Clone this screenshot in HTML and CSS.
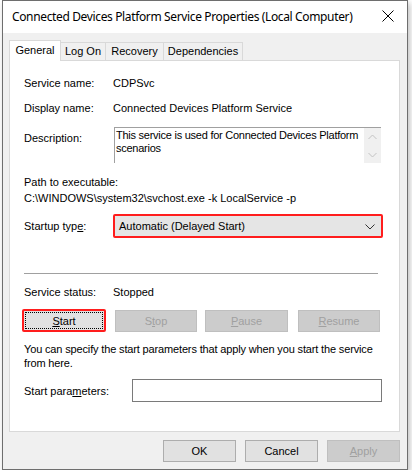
FILE: index.html
```html
<!DOCTYPE html>
<html lang="en">

<head>
    <meta charset="UTF-8">
    <meta name="viewport" content="width=device-width, initial-scale=1.0">
    <title>Connected Devices Platform Service Properties (Local Computer)</title>
    <link rel="stylesheet" href="styles.css">
</head>

<body>
    <div class="window">
        <div class="titlebar">
            <span class="title">Connected Devices Platform Service Properties (Local Computer)</span>
            <span class="close">
                <svg width="12" height="12" viewBox="0 0 12 12">
                    <path d="M0.5 0.5 L11.5 11.5 M11.5 0.5 L0.5 11.5" stroke="#000" stroke-width="1" fill="none" />
                </svg>
            </span>
        </div>
        <div class="client">
            <ul class="tabs">
                <li class="active tab-general">General</li>
                <li class="tab-logon">Log On</li>
                <li class="tab-recovery">Recovery</li>
                <li class="tab-deps">Dependencies</li>
            </ul>
            <div class="panel">
                <div class="row row-name">
                    <span class="label">Service name:</span>
                    <span class="value">CDPSvc</span>
                </div>
                <div class="row row-display">
                    <span class="label">Display name:</span>
                    <span class="value">Connected Devices Platform Service</span>
                </div>
                <div class="row row-desc">
                    <span class="label">Description:</span>
                    <div class="desc">
                        <div class="desc-text">This service is used for Connected Devices Platform scenarios</div>
                        <div class="scroll">
                            <svg width="9" height="6" viewBox="0 0 9 6"><path d="M0.5 5 L4.5 1 L8.5 5" stroke="#c2c2c2" fill="none" /></svg>
                            <svg width="9" height="6" viewBox="0 0 9 6"><path d="M0.5 1 L4.5 5 L8.5 1" stroke="#c2c2c2" fill="none" /></svg>
                        </div>
                    </div>
                </div>
                <div class="path">
                    <div>Path to executable:</div>
                    <div>C:\WINDOWS\system32\svchost.exe -k LocalService -p</div>
                </div>
                <div class="row row-startup">
                    <span class="label">Startup typ<u>e</u>:</span>
                    <div class="combo">
                        <span>Automatic (Delayed Start)</span>
                        <svg width="10" height="6" viewBox="0 0 10 6"><path d="M0.5 0.5 L5 5 L9.5 0.5" stroke="#333" fill="none" /></svg>
                    </div>
                </div>
                <div class="sep"></div>
                <div class="row row-status">
                    <span class="label">Service status:</span>
                    <span class="value">Stopped</span>
                </div>
                <div class="buttons">
                    <div class="mark"><button class="btn focus"><span><u>S</u>tart</span></button></div>
                    <button class="btn disabled btn-stop">S<u>t</u>op</button>
                    <button class="btn disabled btn-pause"><u>P</u>ause</button>
                    <button class="btn disabled btn-resume"><u>R</u>esume</button>
                </div>
                <p class="hint">You can specify the start parameters that apply when you start the service from here.</p>
                <div class="row row-params">
                    <span class="label">Start para<u>m</u>eters:</span>
                    <div class="input"></div>
                </div>
            </div>
            <div class="footer">
                <button class="btn">OK</button>
                <button class="btn">Cancel</button>
                <button class="btn disabled"><u>A</u>pply</button>
            </div>
        </div>
    </div>
</body>

</html>
```

FILE: styles.css
```css
body {
    margin: 0;
    background: #fff;
    font-family: "Liberation Sans", Arial, sans-serif;
    font-size: 11px;
    color: #000;
}

ul {
    list-style: none;
    padding: 0;
    margin: 0;
}

.window {
    width: 404px;
    height: 468px;
    margin-left: 2px;
    border: 1px solid #6e6e6e;
    background: #f0f0f0;
    box-shadow: 2px 3px 6px rgba(0, 0, 0, 0.25);
}

.titlebar {
    height: 32px;
    background: #fff;
    display: flex;
    align-items: center;
    justify-content: space-between;
    padding: 0 13px 0 9px;
}

.title {
    font-family: "Noto Sans", sans-serif;
    font-size: 12px;
    letter-spacing: -0.36px;
    margin-top: -1px;
}

.close {
    display: flex;
    margin-top: -2px;
}

.client {
    padding: 7px 7px 0 6px;
}

.tabs {
    display: flex;
    align-items: flex-end;
    height: 20px;
}

.tabs li {
    line-height: 17px;
    border: 1px solid #d9d9d9;
    border-bottom: none;
    border-left: none;
    background: #f0f0f0;
    text-align: center;
    box-sizing: border-box;
    height: 18px;
}

.tabs li.active {
    height: 21px;
    line-height: 18px;
    background: #fff;
    border-left: 1px solid #d9d9d9;
    position: relative;
    z-index: 1;
    margin-bottom: -1px;
}

.tab-general {
    width: 52px;
}

.tab-logon {
    width: 45px;
}

.tab-recovery {
    width: 58px;
}

.tab-deps {
    width: 79px;
}

.panel {
    height: 370px;
    background: #fff;
    border: 1px solid #d9d9d9;
    padding: 0 17px 0 14px;
    width: 358px;
}

.row {
    display: flex;
    align-items: center;
    height: 14px;
}

.label {
    width: 89px;
    flex: none;
}

.row-name {
    margin-top: 15px;
}

.row-display {
    margin-top: 11px;
}

.row-desc {
    margin-top: 12px;
    height: 36px;
    align-items: flex-start;
}

.row-desc .label {
    padding-top: 5px;
    width: 90px;
}

.desc {
    flex: 1;
    height: 35px;
    display: flex;
    border-top: 1px solid #a0a0a0;
    border-left: 1px solid #a0a0a0;
    margin-right: 1px;
}

.desc-text {
    flex: 1;
    padding: 1px 0 0 1px;
    line-height: 13px;
    letter-spacing: -0.25px;
}

.scroll {
    width: 17px;
    flex: none;
    background: #f0f0f0;
    display: flex;
    flex-direction: column;
    align-items: center;
    justify-content: space-between;
    padding: 6px 0 5px;
    box-sizing: border-box;
}

.path {
    margin-top: 11px;
    line-height: 16px;
}

.row-startup {
    margin-top: 8px;
    height: 24px;
}

.combo {
    flex: 1;
    height: 20px;
    border: 2px solid #ff1d1d;
    border-radius: 2px;
    background: #e5e5e5;
    display: flex;
    align-items: center;
    justify-content: space-between;
    padding: 0 6px 0 4px;
    margin-right: -1px;
}

.combo svg {
    margin-top: 1px;
}

.sep {
    height: 1px;
    background: #a0a0a0;
    margin-top: 35px;
    margin-right: 4px;
}

.row-status {
    margin-top: 11px;
}

.buttons {
    display: flex;
    align-items: center;
    margin: 10px 0 0 -2px;
    height: 23px;
}

.btn {
    font-family: "Liberation Sans", Arial, sans-serif;
    font-size: 11px;
    height: 22px;
    padding: 0;
    border: 1px solid #adadad;
    background: #e1e1e1;
    color: #000;
}

.btn.disabled {
    background: #cccccc;
    border-color: #bfbfbf;
    color: #a0a0a0;
}

.mark {
    border: 2px solid #ff1d1d;
    border-radius: 2px;
    width: 80px;
    height: 19px;
    display: flex;
}

.mark .btn {
    width: 80px;
    height: 19px;
    border: none;
    padding: 1px;
    background: #e1e1e1;
}

.mark .btn span {
    display: flex;
    align-items: center;
    justify-content: center;
    height: 100%;
    border: 1px dotted #000;
    box-sizing: border-box;
}

.btn-stop {
    width: 82px;
    margin-left: 9px;
}

.btn-pause {
    width: 83px;
    margin-left: 8px;
}

.btn-resume {
    width: 82px;
    margin-left: 10px;
}

.hint {
    margin: 10px 0 0;
    line-height: 14px;
    width: 358px;
    letter-spacing: -0.15px;
}

.row-params {
    margin-top: 9px;
    height: 23px;
}

.row-params .label {
    width: 108px;
}

.input {
    flex: 1;
    height: 21px;
    border: 1px solid #7a7a7a;
    background: #fff;
}

.footer {
    display: flex;
    justify-content: flex-end;
    gap: 9px;
    margin-top: 8px;
}

.footer .btn {
    width: 73px;
}
```
